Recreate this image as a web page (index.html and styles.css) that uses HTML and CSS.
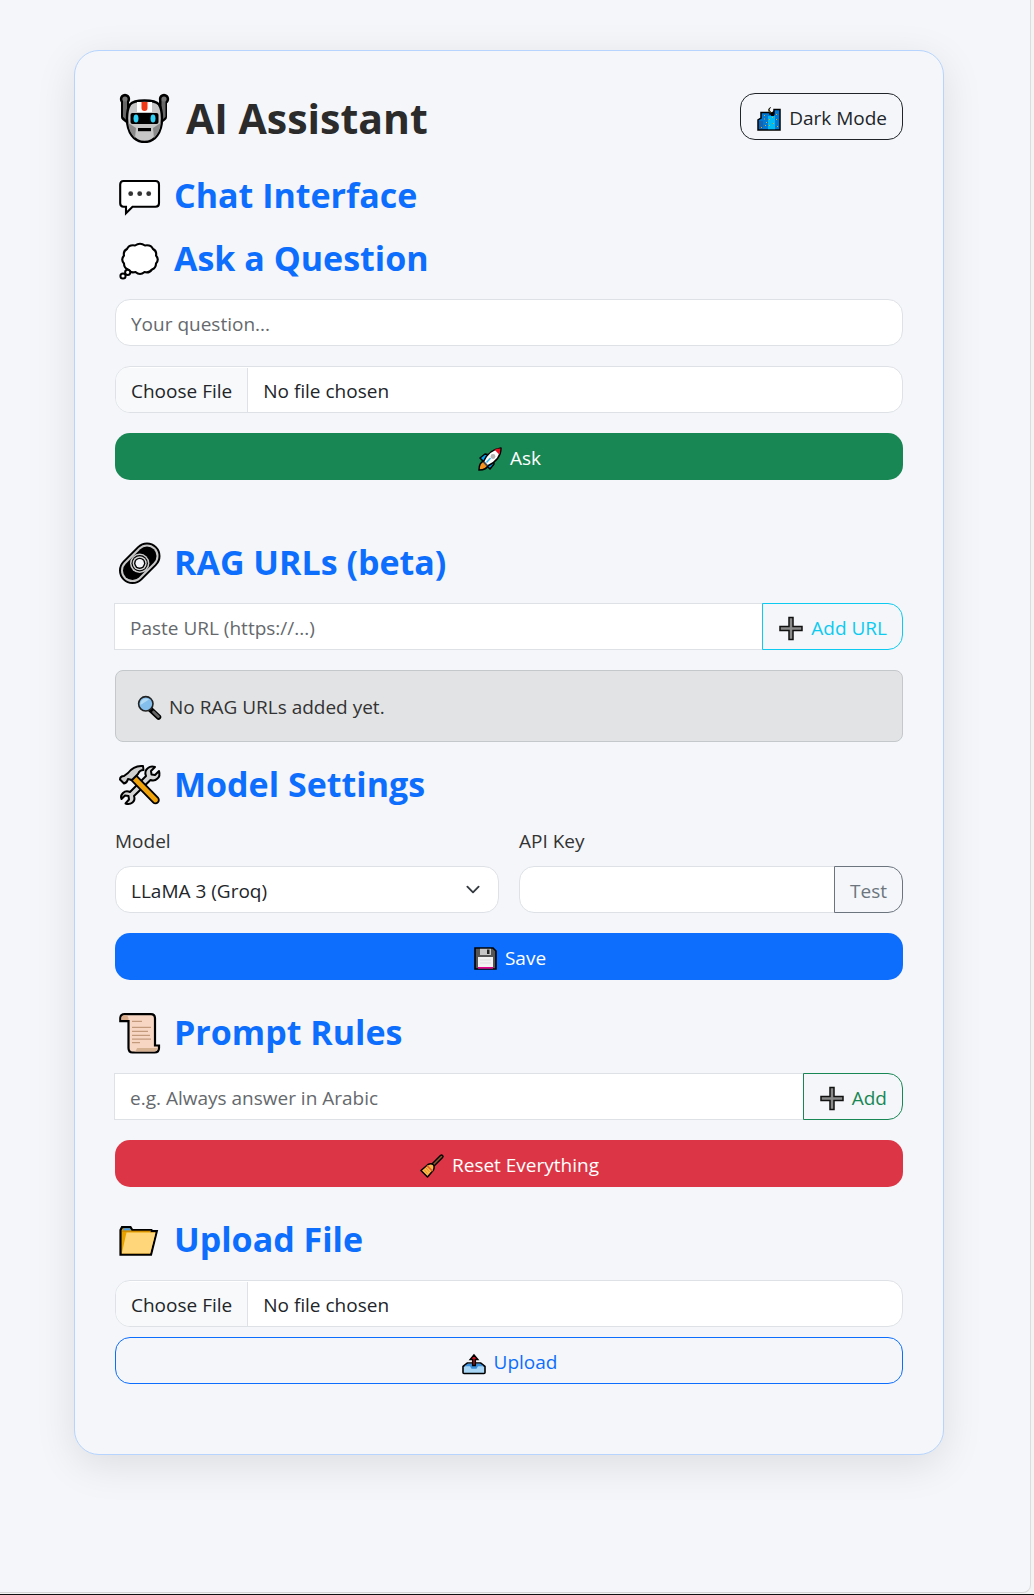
FILE: index.html
```
<!DOCTYPE html>
<html lang="en">
<head>
<meta charset="utf-8">
<meta name="viewport" content="width=device-width, initial-scale=1">
<title>AI Assistant</title>
<link rel="stylesheet" href="styles.css">
</head>
<body>
<div class="page">
<main class="card">
  <header class="card-header">
    <h1 class="title">
      <svg class="title-icon" viewBox="0 0 58 52" aria-hidden="true">
        <path d="M10 9v17l5 4M48 9v17l-5 4" fill="none" stroke="#000" stroke-width="8" stroke-linejoin="round"/>
        <circle cx="10" cy="8" r="5.2"/><circle cx="49" cy="8" r="5.2"/>
        <path d="M10 9v16l5 5M48.500 9v16l-5 5" fill="none" stroke="#686868" stroke-width="4"/>
        <circle cx="10" cy="8" r="2.6" fill="#777"/><circle cx="49" cy="8" r="2.6" fill="#777"/>
        <path d="M29.500 9.500c-8 0-12 1-14.500 4-2.500 4-3 9-3 14 0 14 7 23.500 17.500 23.500S47 41.500 47 27.500c0-5-.5-10-3-14-2.500-3-6.500-4-14.500-4z" fill="#c6c6c6" stroke="#000" stroke-width="2.400"/>
        <path d="M13.400 32l7.600 5-1 10c-4-4-6.600-9-6.600-15zM45.600 32L38 37l1 10c4-4 6.600-9 6.600-15z" fill="#8a8a8a"/>
        <path d="M22 11h15v10H22z" fill="#fff"/>
        <path d="M26.500 11h6v6q0 3-3 3t-3-3z" fill="#f03a17"/>
        <rect x="15.500" y="22" width="28" height="11" rx="2"/>
        <ellipse cx="21" cy="27.500" rx="2.500" ry="4" fill="#31d2f7"/><ellipse cx="38" cy="27.500" rx="2.500" ry="4" fill="#31d2f7"/>
        <rect x="23" y="37" width="13" height="3.200"/>
      </svg>
      AI Assistant
    </h1>
    <button class="btn btn-dark" type="button">
      <svg class="btn-icon" viewBox="0 0 26 26" aria-hidden="true">
        <path d="M2 25V15l3-2V7.500h9V9h4V4.500h6V25z" fill="#0078d4" stroke="#000" stroke-width="1.500"/>
        <path d="M12 11h7v13.200h-7z" fill="#00bcf2"/>
        <path d="M3 16h4v8H3z" fill="#1563ad"/>
        <path d="M14.500 2.500a2.800 2.800 0 1 0 3 4.500 2.500 2.500 0 0 1-3-4.500z" fill="#ffd800" stroke="#000" stroke-width=".8"/>
        <path d="M8 10h1v1H8zM8 13.500h1v1H8zM5 22h1v1H5zM10 17h1v1h-1zM13 14h1v1h-1zM16 12h1v1h-1zM13 20h1v1h-1zM17 18h1v1h-1zM20 9h1v1h-1zM20 14h1v1h-1zM21 21h1v1h-1zM9 20h1v1H9z" fill="#e8a812"/>
        <path d="M15 8l3-2v5h-3z"/>
      </svg>
      Dark Mode
    </button>
  </header>

  <h2 class="heading">
    <svg class="heading-icon" viewBox="0 0 48 43" aria-hidden="true">
      <path d="M8.500 8h32q3.500 0 3.500 3.500v18.700q0 3.500-3.500 3.500H17.500L11 40.200v-6.500H8.500Q5.200 33.700 5.200 30.200V11.500Q5.200 8 8.500 8z" fill="#fff" stroke="#000" stroke-width="2.100"/>
      <circle cx="15.700" cy="20.700" r="2.400" fill="#333"/><circle cx="24.700" cy="20.700" r="2.400" fill="#333"/><circle cx="33.700" cy="20.700" r="2.400" fill="#333"/>
    </svg>
    Chat Interface
  </h2>

  <section class="section section-ask">
    <h2 class="heading">
      <svg class="heading-icon" viewBox="0 0 48 43" aria-hidden="true">
        <path d="M20 9.500Q25 6 30 9.500Q36 8.500 38 13Q42 15 41 19.500Q44.500 23.500 41 27.500Q41 32 37 33.500Q34 37.500 29.500 36Q25 40 20.500 36Q15.500 37.500 13 33.500Q9 32 9 27.500Q5.500 23.500 9 19.500Q8 15 12 13Q14 8.500 20 9.500z" fill="#fff" stroke="#000" stroke-width="2.100" stroke-linejoin="round"/>
        <circle cx="12.700" cy="36.300" r="2.600" fill="#fff" stroke="#000" stroke-width="2"/>
        <circle cx="8" cy="40" r="2.600" fill="#fff" stroke="#000" stroke-width="2"/>
      </svg>
      Ask a Question
    </h2>
    <form class="stack">
      <input class="control" type="text" placeholder="Your question..." aria-label="Your question">
      <input class="control control-file" type="file" aria-label="Attach a file">
      <button class="btn btn-success" type="button">
        <svg class="btn-icon" viewBox="0 0 26 26" aria-hidden="true">
          <path d="M3 13l5-4 5 1-5 8zM13 24l4-5-1-5-8 5z" fill="#00a3ee" stroke="#000" stroke-width="1.500" stroke-linejoin="round"/>
          <path d="M7 16c-4 1-5 4-5 9 5 0 8-1 9-5z" fill="#f7941d" stroke="#000" stroke-width="1.500"/>
          <path d="M6.500 16.500C10 9 15 4 24 3c0 8-5 14-13.500 18z" fill="#fff" stroke="#000" stroke-width="1.500" stroke-linejoin="round"/>
          <path d="M17.500 4.700q3-1.200 6-1.200-.2 3-1.300 6z" fill="#e81224"/>
          <path d="M7 16.500l4 4-1.500.7-3.500-3.700z" fill="#555"/>
          <circle cx="16" cy="11.500" r="2.400" fill="#b5b5b5"/>
          <path d="M9.500 17.500l4-4.500" stroke="#35b9f1" stroke-width="1.500"/>
        </svg>
        Ask
      </button>
    </form>
  </section>

  <section class="section section-rag">
    <h2 class="heading">
      <svg class="heading-icon" viewBox="0 0 48 43" aria-hidden="true">
        <g fill="none" stroke-linecap="round">
          <path d="M17.500 30.500L32 16" stroke="#000" stroke-width="27"/>
          <path d="M17.500 30.500L32 16" stroke="#c9c9c9" stroke-width="23"/>
          <path d="M17.500 30.500L32 16" stroke="#000" stroke-width="19"/>
        </g>
        <circle cx="24.700" cy="23.300" r="9.700" fill="#c9c9c9"/>
        <circle cx="24.700" cy="23.300" r="8.200"/>
        <circle cx="24.700" cy="23.300" r="7" fill="#d4d4d4"/>
        <circle cx="24.700" cy="23.300" r="5.600"/>
        <circle cx="24.700" cy="23.300" r="4.200" fill="#f4f6fa"/>
      </svg>
      RAG URLs (beta)
    </h2>
    <div class="stack">
      <div class="input-group input-group-square">
        <input class="control" type="url" placeholder="Paste URL (https://...)" aria-label="RAG URL">
        <button class="btn btn-outline-info" type="button">
          <svg class="btn-icon" viewBox="0 0 26 26" aria-hidden="true"><path d="M11 2.500h4v9h9v4h-9v9h-4v-9H2v-4h9z" fill="#8a8a8a" stroke="#111" stroke-width="1.500"/></svg>
          Add URL
        </button>
      </div>
      <div class="notice">
        <svg class="btn-icon" viewBox="0 0 26 26" aria-hidden="true">
          <path d="M14.500 15.500l8 7.500" stroke="#000" stroke-width="5.500" stroke-linecap="round"/>
          <path d="M17.500 18l5 4.700" stroke="#666" stroke-width="2.600" stroke-linecap="round"/>
          <circle cx="9.800" cy="9.800" r="7.200" fill="#83beec" stroke="#222" stroke-width="1.600"/>
          <path d="M4.500 11a5.500 5.500 0 0 1 8.500-5.500z" fill="#b3daf5"/>
        </svg>
        No RAG URLs added yet.
      </div>
    </div>
  </section>

  <section class="section section-model">
    <h2 class="heading">
      <svg class="heading-icon" viewBox="0 0 48 43" aria-hidden="true">
        <path d="M8 31q3-3 7-1L31 14q-2-5 2-8 3-2.500 7-1l-4 4 .5 3.500 3.500.5 4-4q1.500 5-1.500 7.500-3 3-7 1.500L19 34q1.500 4-1.500 6.500-3 2.500-7 1l3.500-4-.5-3.500-3.500-.5-3.500 3.500q-1.500-3 1.500-6z" fill="#d5d5d5" stroke="#000" stroke-width="2" stroke-linejoin="round"/>
        <path d="M18 15l22.500 23" stroke="#000" stroke-width="8.500" stroke-linecap="round"/>
        <path d="M17 14l23.500 24" stroke="#f0a30a" stroke-width="4.800" stroke-linecap="round"/>
        <path d="M13 11q6-8 15-7l.5 4q-4 0-5.500 4l-6 6-4-1q-1 4-4 4.500l-4-4q0-3.500 4-3.500z" fill="#cfcfcf" stroke="#000" stroke-width="2" stroke-linejoin="round"/>
      </svg>
      Model Settings
    </h2>
    <form class="stack">
      <div class="fields">
        <div class="field">
          <label class="label" for="model">Model</label>
          <select class="control control-select" id="model"><option>LLaMA 3 (Groq)</option></select>
        </div>
        <div class="field">
          <label class="label" for="api-key">API Key</label>
          <div class="input-group">
            <input class="control" type="password" id="api-key">
            <button class="btn btn-outline-secondary" type="button">Test</button>
          </div>
        </div>
      </div>
      <button class="btn btn-primary" type="button">
        <svg class="btn-icon" viewBox="0 0 26 26" aria-hidden="true">
          <path d="M3 3h18l3 3v18H3z" fill="#555" stroke="#000" stroke-width="1.600"/>
          <path d="M8 3.800h11v6.200H8z" fill="#c6c6c6"/><path d="M15 4.500h2.500V9H15z" fill="#222"/>
          <path d="M6 12h15v11.200H6z" fill="#f2f2f2"/><path d="M6 22h15v1.600H6z" fill="#e3008c"/>
          <path d="M8 15h11M8 18h11" stroke="#ddd"/>
        </svg>
        Save
      </button>
    </form>
  </section>

  <section class="section">
    <h2 class="heading">
      <svg class="heading-icon" viewBox="0 0 48 43" aria-hidden="true">
        <path d="M5.300 11.200V8.500q0-4.300 4.500-4.300H36q4 0 4 4.300v27h4v2.500q0 4.500-4.500 4.500H17.500q-4 0-4-4.500V11.200z" fill="#f7d7c4" stroke="#000" stroke-width="2.200"/>
        <path d="M6.400 10V8.500Q6.400 5.300 9.800 5.300t3.700 3.200V10z" fill="#d9ab8a"/>
        <path d="M22 38h20q0 3.500-3 3.500H18.500q2.500 0 3.500-3.500z" fill="#d6b192"/>
        <path d="M17 11.400h10M17 17.400h19M17 21.400h16M17 25.300h18M17 29.200h19M17 32.700h8" stroke="#c39a7c" stroke-width="1.300"/>
      </svg>
      Prompt Rules
    </h2>
    <div class="stack">
      <div class="input-group input-group-square">
        <input class="control" type="text" placeholder="e.g. Always answer in Arabic" aria-label="Prompt rule">
        <button class="btn btn-outline-success" type="button">
          <svg class="btn-icon" viewBox="0 0 26 26" aria-hidden="true"><path d="M11 2.500h4v9h9v4h-9v9h-4v-9H2v-4h9z" fill="#8a8a8a" stroke="#111" stroke-width="1.500"/></svg>
          Add
        </button>
      </div>
      <button class="btn btn-danger" type="button">
        <svg class="btn-icon" viewBox="0 0 26 26" aria-hidden="true">
          <path d="M13 14L22.500 4.500" stroke="#000" stroke-width="4.400" stroke-linecap="round"/>
          <path d="M13 14l9.500-9.500" stroke="#8e562e" stroke-width="1.600" stroke-linecap="round"/>
          <path d="M9 12.500q3-1.500 5 0t.5 5.500L8.500 25 2 18.500z" fill="#fdb94b" stroke="#000" stroke-width="1.500" stroke-linejoin="round"/>
          <path d="M8 13.700l5.500 5.500" stroke="#e3662a" stroke-width="1.800"/>
          <path d="M5 17.500l3.500 4M7 16l3.500 4" stroke="#d68a18" stroke-width=".8"/>
        </svg>
        Reset Everything
      </button>
    </div>
  </section>

  <section class="section">
    <h2 class="heading">
      <svg class="heading-icon" viewBox="0 0 48 43" aria-hidden="true">
        <path d="M5.500 37.600V13l1.500-2.800h8.500l1.800 2.800h19v1.200h5.500L36 37.600z" fill="#e8a200" stroke="#000" stroke-width="2.200"/>
        <path d="M8 13.500l.8-2.300h6l1.300 2.300z" fill="#4a9be8"/>
        <path d="M11.500 15.500h29l-5.300 21H6.800z" fill="#ffd679"/>
        <path d="M7 14.200h29" stroke="#c98500" stroke-width="1"/>
      </svg>
      Upload File
    </h2>
    <form class="stack stack-tight">
      <input class="control control-file" type="file" aria-label="File to upload">
      <button class="btn btn-outline-primary" type="button">
        <svg class="btn-icon" viewBox="0 0 26 26" aria-hidden="true">
          <path d="M2 17.500l4.500-3.500h13l4.500 3.500v6q0 1-1 1H3q-1 0-1-1z" fill="#a9d6f5" stroke="#000" stroke-width="1.600" stroke-linejoin="round"/>
          <path d="M3.500 17.300l3-2.500h13l3 2.500h-5.500l-1.500 2.400h-5L9 17.300z" fill="#3b8fdb"/>
          <path d="M13 6l3.800 4.500h-2.500v6h-2.600v-6H9.200z" fill="#e81224" stroke="#000" stroke-width="1.500"/>
        </svg>
        Upload
      </button>
    </form>
  </section>
</main>
</div>
</body>
</html>
```
FILE: styles.css
```
*,
*::before,
*::after {
  box-sizing: border-box;
}

html {
  background: #f3f3f3;
}

body {
  margin: 0;
  min-height: 100vh;
  display: flex;
  flex-direction: column;
  gap: 1px;
  padding-right: 3px;
  color: #333;
  font-family: "Open Sans", "Noto Sans", sans-serif;
  font-size: 19px;
  line-height: 30px;
}

body::after {
  content: "";
  height: 1px;
  margin-right: -3px;
  background: #111;
}

.page {
  flex: 1;
  padding: 50px 86px 60px 74px;
  background: #f4f6fa;
  border-right: 1px solid #dcdcdc;
  border-bottom: 1px solid #d5d5d5;
  border-bottom-right-radius: 8px;
}

.card {
  padding: 40px 40px 70px;
  background: #f4f6fa;
  border: 1px solid #b6d4fe;
  border-radius: 25px;
  box-shadow: 0 10px 40px rgba(0, 0, 0, 0.1);
}

.card-header {
  display: flex;
  align-items: flex-start;
  justify-content: space-between;
  margin-bottom: 28px;
}

.card-header .btn {
  margin-top: 2px;
}

.title,
.heading {
  display: flex;
  align-items: flex-start;
  margin: 0;
  font-weight: 700;
}

.title {
  gap: 13px;
  color: #2b2b2b;
  font-size: 41px;
  line-height: 54px;
}

.title-icon {
  width: 58px;
  height: 52px;
}

.heading {
  gap: 11px;
  margin-bottom: 18px;
  color: #0d6efd;
  font-size: 34px;
  line-height: 45px;
}

.heading-icon {
  width: 48px;
  height: 43px;
  overflow: visible;
}

.section {
  margin-top: 30px;
}

.section-ask {
  margin-top: 18px;
}

.section-model {
  margin-top: 20px;
}

.section-rag {
  margin-top: 60px;
}

.stack {
  display: flex;
  flex-direction: column;
  gap: 20px;
}

.stack-tight {
  gap: 10px;
}

.control {
  display: block;
  width: 100%;
  height: 47px;
  padding: 9px 15px 7px;
  background: #fff;
  border: 1px solid #dee2e6;
  border-radius: 15px;
  color: #212529;
  font: inherit;
}

.control::placeholder {
  color: #65696d;
  opacity: 1;
}

.control-file {
  overflow: hidden;
}

.control-file::file-selector-button {
  height: 47px;
  margin: -9px 15px -8px -15px;
  padding: 8px 15px;
  background: #f8f9fa;
  border: 0 solid #dee2e6;
  border-right-width: 1px;
  color: #212529;
  font: inherit;
}

.control-select {
  padding-right: 45px;
  appearance: none;
  background: #fff url("data:image/svg+xml,%3csvg xmlns='http://www.w3.org/2000/svg' viewBox='0 0 16 16'%3e%3cpath fill='none' stroke='%23343a40' stroke-linecap='round' stroke-linejoin='round' stroke-width='2' d='m2 5 6 6 6-6'/%3e%3c/svg%3e") no-repeat right 15px center / 20px 15px;
}

.input-group {
  display: flex;
}

.input-group .control {
  flex: 1;
  min-width: 0;
  border-top-right-radius: 0;
  border-bottom-right-radius: 0;
}

.input-group .btn {
  margin-left: -1px;
  border-top-left-radius: 0;
  border-bottom-left-radius: 0;
}

.input-group-square .control {
  margin-left: -1px;
  border-radius: 0;
}

.fields {
  display: grid;
  grid-template-columns: 1fr 1fr;
  gap: 20px;
}

.label {
  display: block;
  padding-top: 1px;
  margin-bottom: 10px;
}

.btn {
  display: flex;
  align-items: center;
  justify-content: center;
  gap: 7px;
  height: 47px;
  padding: 9px 15px 7px;
  background: transparent;
  border: 1px solid transparent;
  border-radius: 15px;
  font: inherit;
  white-space: nowrap;
  cursor: pointer;
}

.btn-icon {
  flex: none;
  width: 26px;
  height: 26px;
}

.btn-success {
  background: #198754;
  color: #fff;
}

.btn-primary {
  background: #0d6efd;
  color: #fff;
}

.btn-danger {
  background: #dc3545;
  color: #fff;
}

.btn-dark {
  border-color: #212529;
  color: #212529;
}

.btn-outline-info {
  border-color: #0dcaf0;
  color: #0dcaf0;
}

.btn-outline-secondary {
  border-color: #6c757d;
  color: #6c757d;
}

.btn-outline-success {
  border-color: #198754;
  color: #198754;
}

.btn-outline-primary {
  border-color: #0d6efd;
  color: #0d6efd;
}

.notice {
  display: flex;
  align-items: center;
  gap: 7px;
  padding: 21px 20px 19px;
  background: #e2e3e5;
  border: 1px solid #c4c8cb;
  border-radius: 8px;
}
```
